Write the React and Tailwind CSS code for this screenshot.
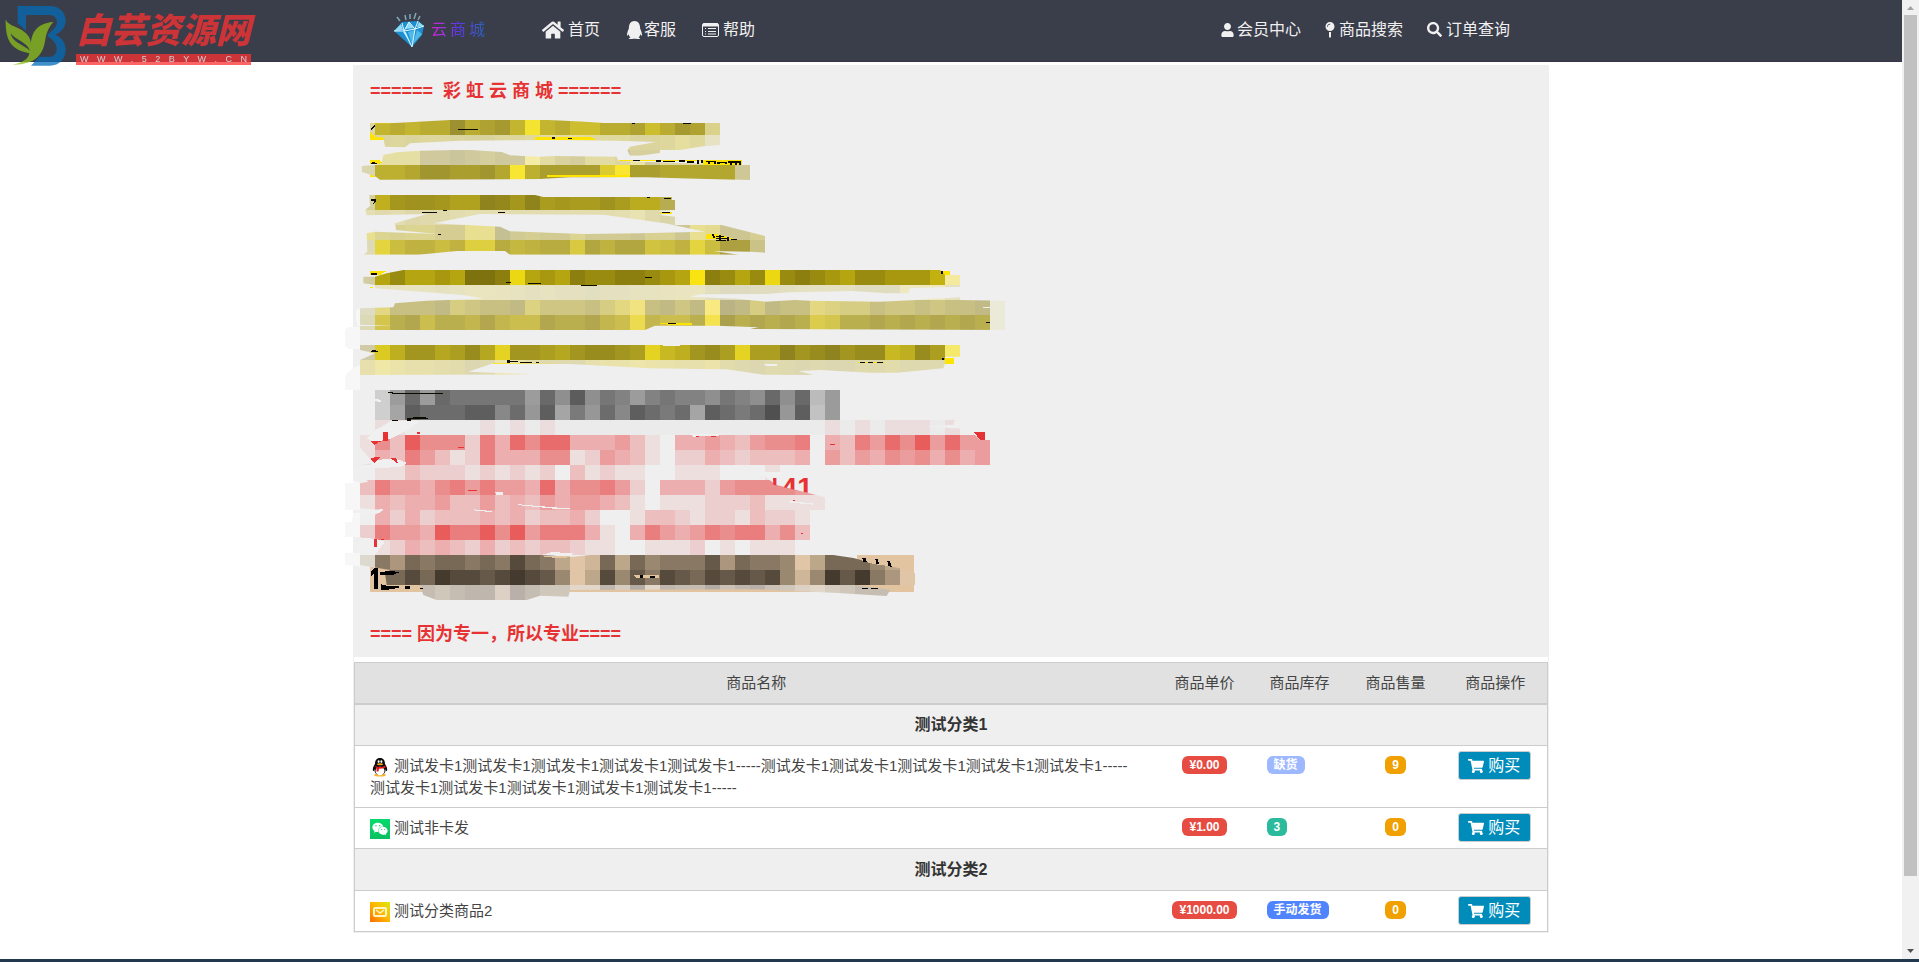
import React from 'react';
import { FaHome, FaQq, FaUser, FaMapPin, FaSearch, FaShoppingCart, FaWeixin } from 'react-icons/fa';

// Mosaic rows of the notice. Every digit is one square: 0 = dark end, 9 = light end.
const CELL = 45;
const notice = [
  {
    id: 'line1',
    clip: 'M90 190L150 190 220 186 330 180 625 180 690 183 735 185 790 189 1140 189 1140 255 1095 258 1020 270 900 287 870 287 862 270 870 260 948 246 830 242 640 240 360 242 210 250 195 262 135 260 130 232 105 232 90 215Z',
    rows: [
      { row: 4, col: 1, from: 'dcd7a0', to: 'dcd7a0', cells: '0' },
      { row: 4, col: 2, from: '9c9030', to: 'f4e330', cells: '4343303214943553325312' },
      { row: 4, col: 24, from: 'dad28a', to: 'dad28a', cells: '0' },
      { row: 5, col: 2, from: 'd0cb9a', to: 'e8e0a0', cells: '4545543355677766644586' },
      { row: 5, col: 24, from: 'e6e2c4', to: 'e6e2c4', cells: '0' },
      { row: 6, col: 17, from: 'c9c39c', to: 'e8e0a0', cells: '9044' },
    ],
  },
  {
    id: 'line2',
    clip: 'M130 285L170 277 240 272 380 269 485 276 510 286 550 288 600 290 645 288 830 290 835 303 1205 315 1230 315 1230 360 1070 356 920 352 690 352 600 357 120 359 108 350 65 335 65 318 105 315 125 310Z',
    rows: [
      { row: 6, col: 2, from: 'cbc59c', to: 'f4eca6', cells: '6661101211953255471444444' },
      { row: 7, col: 1, from: 'd9d5ad', to: 'd9d5ad', cells: '0' },
      { row: 7, col: 2, from: 'a0952f', to: 'f8e632', cells: '332001102931111691122222' },
      { row: 7, col: 26, from: 'cfc896', to: 'cfc896', cells: '0' },
    ],
  },
  {
    id: 'line3',
    clip: 'M88 405L585 405 610 411 995 411 995 420 1005 420 1005 450 960 452 965 466 1005 470 1005 495 1145 495 1275 528 1275 578 1230 575 1120 573 1195 584 510 584 495 573 350 573 235 584 70 584 82 575 80 520 105 515 295 522 168 510 165 490 260 462 80 466 76 450 90 438ZM420 462L790 464 975 490 1095 515 900 520 730 522 510 514 480 500 280 490Z',
    rows: [
      { row: 9, col: 1, from: 'd5d0a0', to: 'd5d0a0', cells: '0' },
      { row: 9, col: 2, from: '8f831d', to: 'c0b01f', cells: '9433466014054553588' },
      { row: 9, col: 21, from: 'b8ac50', to: 'b8ac50', cells: '0' },
      { row: 10, col: 1, from: 'd5d0a5', to: 'ece5b5', cells: '645344566655555556842' },
      { row: 11, col: 1, from: 'c5bf94', to: 'e8df90', cells: '965664499034336333255298224' },
      { row: 12, col: 1, from: 'dedab5', to: 'dedab5', cells: '0' },
      { row: 12, col: 2, from: 'aca040', to: 'e4d540', cells: '9533538824322713116539500' },
      { row: 12, col: 27, from: 'c9c388', to: 'c9c388', cells: '0' },
    ],
  },
  {
    id: 'line5',
    clip: 'M105 650L140 640 190 630 1800 630 1815 645 1860 645 1860 680 1710 685 1705 700 1640 700 1540 693 1350 697 1275 702 1080 703 1050 710 1190 716 1275 725 1365 720 1410 722 1620 725 1730 720 1770 717 1860 712 1860 720 1995 722 1995 810 1230 807 1255 802 1130 797 945 797 915 810 60 810 60 798 160 797 60 794 60 745 160 742 165 730 260 722 430 716 370 705 105 685 105 675 70 670 70 650Z',
    rows: [
      { row: 14, col: 1, from: 'd1cca2', to: 'd1cca2', cells: '0' },
      { row: 14, col: 2, from: '7e720f', to: 'f9e412', cells: '42443400184341221123491242821234223335' },
      { row: 14, col: 40, from: 'f5e9a0', to: 'f5e9a0', cells: '0' },
      { row: 15, col: 2, from: 'dedac0', to: 'f2ebbf', cells: '555434665434332334456620011233331117773' },
      { row: 16, col: 1, from: 'dfdcc4', to: 'dfdcc4', cells: '0' },
      { row: 16, col: 2, from: 'bab484', to: 'f8ea80', cells: '62221432215333246821319014122654423323221' },
      { row: 16, col: 43, from: 'ebead9', to: 'ebead9', cells: '0' },
      { row: 17, col: 1, from: 'dcd9b6', to: 'dcd9b6', cells: '0' },
      { row: 17, col: 2, from: 'aaa04e', to: 'f4e24e', cells: '52142231344122134834429021212652212121212' },
      { row: 17, col: 43, from: 'ebead9', to: 'ebead9', cells: '0' },
    ],
  },
  {
    id: 'line7',
    clip: 'M60 855L1860 855 1860 890 1815 890 1815 910 1810 925 1670 938 1590 938 1440 930 1375 933 1420 945 1270 944 1160 928 1080 927 930 925 690 912 460 910 385 935 575 943 60 945 60 900 105 880 60 870Z',
    rows: [
      { row: 19, col: 1, from: 'd0cba6', to: 'd0cba6', cells: '0' },
      { row: 19, col: 2, from: '8f831f', to: 'e4d322', cells: '85224314922342112396521393302102116513' },
      { row: 19, col: 40, from: 'f5e96b', to: 'f5e96b', cells: '0' },
      { row: 20, col: 1, from: 'dcd7b0', to: 'efe7a8', cells: '597554301884111566876557310210100213111' },
    ],
  },
  {
    id: 'line8',
    clip: 'M105 990H1500V1080H105Z',
    rows: [
      { row: 22, col: 2, from: '5c5c5c', to: 'cfcfcf', cells: '9515122222514042353233423414152' },
      { row: 22, col: 31, from: 'bbbbbb', to: '9b9b9b', cells: '09' },
      { row: 23, col: 2, from: '505050', to: 'cfcfcf', cells: '9612221142516352412326123205156' },
      { row: 23, col: 31, from: 'c2c2c2', to: '9b9b9b', cells: '09' },
    ],
  },
  {
    id: 'line9',
    clip: 'M105 1080L1845 1080 1840 1094 1755 1100 1900 1108 1905 1125 1920 1140 1950 1140 1950 1215 1455 1215 1455 1242 1260 1240 1310 1275 1455 1312 1455 1350 1410 1350 1410 1485 105 1485 105 1460 60 1430 60 1390 130 1350 60 1345 60 1270 85 1265 60 1240 60 1215 100 1210 50 1150 60 1125 95 1110Z',
    rows: [
      { row: 24, col: 2, from: 'ebebeb', to: 'e87070', cells: '110000010101000000000000000000101011101' },
      { row: 25, col: 1, from: 'efefef', to: 'e85c5c', cells: '163966627486884445310445435667.43758695855' },
      { row: 26, col: 1, from: 'efefef', to: 'e85c5c', cells: '143753127444661254310224323334.53546564645' },
      { row: 27, col: 1, from: 'efefef', to: 'e85c5c', cells: '0113222121212031211..1110001000' },
      { row: 28, col: 1, from: 'efefef', to: 'e85c5c', cells: '3755467575548466752.44425666655' },
      { row: 29, col: 1, from: 'efefef', to: 'e85c5c', cells: '1434453353435455431.11122231111' },
      { row: 30, col: 2, from: 'efefef', to: 'e85c5c', cells: '424233343423342..133212213221' },
      { row: 31, col: 1, from: 'efefef', to: 'e85c5c', cells: '275549779695777410475457677463' },
      { row: 32, col: 2, from: 'efefef', to: 'e85c5c', cells: '12434324232332110011120101110' },
    ],
  },
  {
    id: 'line12',
    clip: 'M60 1485L600 1485 700 1490 750 1485 1480 1485 1540 1494 1600 1510 1680 1525 1725 1540 1725 1575 1545 1575 1650 1590 1640 1608 1480 1598 1250 1588 690 1590 685 1610 600 1607 560 1620 290 1620 250 1605 240 1575 140 1575 135 1540 150 1530 60 1515Z',
    rows: [
      { row: 33, col: 1, from: 'ded9ce', to: 'ded9ce', cells: '0' },
      { row: 33, col: 2, from: '443a2e', to: 'e0c6a6', cells: '463433434134798373544426344597333579' },
      { row: 34, col: 2, from: '443a2e', to: 'e0c6a6', cells: '331301121012597152412312121585020469' },
      { row: 35, col: 5, from: 'b3aca5', to: 'e8dccd', cells: '353227135588260823304214578653333' },
    ],
  },
];

const mix = (from, to, level) => {
  const part = (hex, i) => parseInt(hex.slice(i, i + 2), 16);
  const rgb = [0, 2, 4].map((i) => Math.round(part(from, i) + ((part(to, i) - part(from, i)) * level) / 9));
  return `rgb(${rgb.join(',')})`;
};

const NoticeArt = () => (
  <svg
    className="-ml-[25px] mt-[17px] block"
    width="660"
    height="500"
    viewBox="15 180 1980 1500"
    shapeRendering="crispEdges"
    aria-hidden="true"
  >
    {/* marker colour behind the lines */}
    <path
      fill="#ffe400"
      d="M90 190H180V195H135V240H90ZM585 231H755L765 239H585ZM845 189H1095V192H845ZM90 300H120L130 312H90ZM90 345H105V351H90ZM835 300H1205V315H1090V303H840ZM620 345H870V351H620ZM90 414H117V425L105 436H90ZM215 458L325 450V454L280 461H215ZM435 458H615V461H435ZM900 411H996V418H960ZM935 456H996V461H935ZM218 521H315V526H218ZM380 569H497V573H380ZM1100 521H1125L1190 538H1098ZM90 633H140L120 645H90ZM90 681H99V684H90ZM1800 633H1830V645H1815ZM955 793L965 789H1055V795ZM458 911L510 899 655 909V912ZM1815 893H1842V911H1815ZM90 870H110V880H90Z"
    />
    <path fill="#e2c4a1" d="M90 1520H150V1575H1550V1485H1680L1722 1488V1596H90Z" />
    {notice.map(({ id, clip, rows }) => (
      <g key={id} clipPath={`url(#${id})`}>
        <clipPath id={id}>
          <path d={clip} clipRule="evenodd" />
        </clipPath>
        {rows.map(({ row, col, from, to, cells }) =>
          cells.split('').map((level, i) =>
            level === '.' ? null : (
              <rect
                key={`${row}-${col}-${i}`}
                x={15 + (col + i) * CELL}
                y={row * CELL}
                width={CELL}
                height={CELL}
                fill={mix(from, to, Number(level))}
              />
            )
          )
        )}
      </g>
    ))}
    {/* brush gaps */}
    <path
      fill="#f0f0f0"
      d="M105 1016L123 1020V1026L105 1024ZM82 1136L110 1108 155 1082H242L200 1112 148 1138 100 1146ZM108 1200L165 1195 202 1209 180 1222 60 1224 40 1250 40 1225 90 1215ZM1052 1122H1155L1130 1128 1060 1130ZM465 1296H490V1304H468ZM528 1332L620 1340 722 1348 640 1346 540 1336ZM400 1348L455 1353V1356L405 1352ZM40 1352L130 1348 120 1358 40 1364ZM605 1485L635 1476 700 1480 690 1488ZM512 1458L534 1462ZM1345 1323L1420 1330V1334L1350 1328ZM1243 1236H1320V1250H1280ZM60 1434L105 1436 135 1445 105 1485H40ZM970 855H1020V858H970ZM1268 912H1311V917H1280ZM1930 741H1950V744H1930Z"
    />
    <path
      fill="#f7f7f7"
      d="M48 750L60 743V798H50ZM15 815Q18 801 30 801H60V867H30Q15 865 15 850ZM15 950Q25 930 60 915V990H15ZM15 1269H40V1262L60 1268V1350H15ZM15 1386H35L40 1360H60V1432H15ZM15 1480H60V1520L15 1515Z"
    />
    {/* slivers of marker over the squares */}
    <path
      fill="#ffe400"
      d="M585 231H755L765 239H585ZM620 345H870V351H620ZM835 300H1205V315H1090V303H840ZM1100 521H1125L1190 538H1098ZM955 793L965 789H1055V795ZM1555 906H1635V909H1555Z"
    />
    <path fill="#e2c4a1" d="M602 1488H692L680 1493H640ZM880 1546H956V1554H890ZM1620 1486H1722V1535L1680 1522 1600 1512 1560 1500Z" />
    {/* leftovers of the letters */}
    <path
      fill="#0a0a00"
      d="M92 205L105 195V201L95 210ZM355 207H414V210H355ZM636 231H646V237H636ZM685 234H695V237H685ZM875 189H885V192H875ZM1030 189H1052V192H1030ZM93 309L100 306 111 309V312H93ZM880 300H900V303H880ZM948 300H962V306H948ZM970 303H1005V306H970ZM1018 300H1036V306H1018ZM1042 303H1062V309H1042ZM1070 300H1076V312H1070ZM1083 300H1090V309H1083ZM1098 303H1128V312H1122V306H1110V312H1104V306H1098ZM1132 306H1160V312H1154V309H1140V312H1132ZM1165 303H1203V315H1198V309H1190V315H1184V309H1176V315H1170V309H1165ZM93 417H108V426L100 434V429L104 422H93ZM245 456H290V459H245ZM310 450H322V453H310ZM475 456H495V459H475ZM920 411H930V414H920ZM972 414H993V417H972ZM965 456H990V459H965ZM294 523H303V526H294ZM1115 522H1120L1126 534H1120ZM1128 528H1152V531H1128ZM1128 534H1160V537H1128ZM1128 540H1158V543H1128ZM1138 525H1143V543H1138ZM1162 531H1168V543H1162ZM1174 537H1190V540H1174ZM93 639H111V645H93ZM498 666H512V669H498ZM565 669H602V672H565ZM723 675H770V678H723ZM915 651H935V654H915ZM1802 633H1808V642H1802ZM985 789H1008V792H985ZM1937 786H1950V789H1937ZM93 873L101 870 113 873V876H93ZM501 900H509V909H501ZM509 903H535V906H509ZM540 905H575V908H540ZM588 905H596V908H588ZM1806 894H1813V900H1806ZM1560 906H1575V909H1560ZM1585 906H1600V909H1585ZM1610 906H1630V909H1610ZM145 996H155L168 1000H310V1002H168L145 999ZM155 1080H175V1083H155ZM200 1075L232 1071H255L266 1077H212V1083H200Z"
    />
    <path
      fill="#000"
      d="M92 1535L104 1523H113V1587H103V1538L92 1552ZM120 1536L150 1533 180 1536 155 1546 122 1546ZM122 1580V1572L145 1579H178V1583L140 1590H122ZM196 1578H209V1587H196ZM240 1584H249V1587H240ZM899 1545H910V1554H899ZM930 1549H944V1553H930ZM1567 1494H1578V1502L1586 1507H1570ZM1606 1497H1613L1618 1513H1608ZM1642 1503H1650L1656 1521 1644 1518ZM1566 1584H1584V1587H1566ZM1594 1584H1613V1587H1594Z"
    />
    <path
      fill="#e63232"
      d="M130 1116H144V1142L120 1145 104 1154 90 1142H130ZM90 1196L112 1190H124L104 1208ZM152 1194H168L174 1208H168ZM232 1116H240V1121H232ZM355 1161H372V1164H355ZM1068 1128H1078V1131H1068ZM1114 1128H1127V1131H1114ZM1470 1152H1485V1155H1470ZM1900 1116H1936V1140H1922ZM102 1437H112V1461H102ZM123 1437H132V1440H123ZM385 1290H410V1292H385ZM1359 1320H1365V1323H1359ZM1383 1419H1390V1422H1383Z"
    />
    <clipPath id="digits">
      <path d="M1298 1240H1440V1305L1390 1296 1300 1274Z" />
    </clipPath>
    <text
      x="1278"
      y="1311"
      clipPath="url(#digits)"
      fill="#e63232"
      className="font-['Liberation_Sans',sans-serif] text-[84px] font-bold"
    >
      141
    </text>
  </svg>
);

const SiteMark = () => (
  <div className="pointer-events-none absolute left-0 top-0 flex items-start opacity-75">
    <svg className="ml-1 mt-1 h-[63px] w-[63px]" viewBox="12 12 189 189" aria-hidden="true">
      <path
        fill="#046cb8"
        d="M53 18H150C180 18 197 40 197 62C197 80 185 95 165 104C185 112 197 128 197 148C197 178 178 197 150 197H93L118 170H148C160 170 170 162 170 146C170 130 160 122 146 110L142 104L150 98C165 85 171 76 171 66C171 52 160 45 148 45H78V92L53 70Z"
      />
      <path
        fill="#8dc11b"
        fillRule="evenodd"
        d="M17 58C25 85 85 80 93 128C95 105 105 70 160 66C148 80 140 95 136 118C130 165 105 195 38 194C60 190 85 180 88 160C40 150 15 130 17 58ZM32 100C35 125 70 135 90 152C80 125 45 120 32 100Z"
      />
    </svg>
    <div className="ml-[9px] mt-2 w-[175px]">
      <div className="flex h-[46px] items-center text-[35px] font-black italic leading-[44px] text-[#fd3131]">
        白芸资源网
      </div>
      <div className="flex h-[11px] items-center justify-between bg-[#fd3131] px-1 text-[9px] leading-[11px] text-white">
        {'WWW.52BYW.CN'.split('').map((letter, i) => (
          <span key={i}>{letter}</span>
        ))}
      </div>
    </div>
  </div>
);

const Diamond = () => (
  <svg className="h-9 w-8" viewBox="0 0 32 36" aria-hidden="true">
    <path fill="#1d8fd0" d="M1 19L9 10 25 9 31 14 29 23 19 35Z" />
    <path fill="#8fdcf7" d="M1 19L8 12 10 18ZM12 17L16 10 21 16ZM24 15L26 10 31 14ZM10 20L18 32 13 20Z" />
    <path fill="#4fb9ea" d="M15 20L19 33 22 18ZM24 18L20 32 29 22Z" />
    <path stroke="#e4f8ff" strokeWidth="1" fill="none" d="M1 19L11 19 22 17 31 14M11 19L9 11M11 19L16 10 22 17 25 9M11 19L19 35 22 17" />
    <path stroke="#7fa9b4" strokeWidth="1.5" fill="none" d="M4 5L7 9M12 3L13 8M17 2L17 7M23 1L21 7M27 4L25 8" />
  </svg>
);

const ListIcon = () => (
  <svg className="h-[14px] w-[17px]" viewBox="0 0 17 14" fill="none" stroke="currentColor" aria-hidden="true">
    <rect x="0.5" y="0.5" width="16" height="13" rx="1.5" />
    <path d="M1 2H16" strokeWidth="3" />
    <path d="M3 5.5H4M3 8.5H4M3 11H4M6 5.5H14M6 8.5H14M6 11H14" />
  </svg>
);

const QqIcon = () => (
  <svg className="mr-1 inline-block h-5 w-5 align-middle" viewBox="0 0 20 20" aria-hidden="true">
    <ellipse cx="10" cy="18" rx="6" ry="1.6" fill="#f7b52c" />
    <path d="M10 1C6.5 1 5 3.5 5 7C3 10 2.5 12 3 14C3.5 14.5 4.5 13 5 12H15C15.5 13 16.5 14.5 17 14C17.5 12 17 10 15 7C15 3.5 13.5 1 10 1Z" fill="#0b0b0b" />
    <ellipse cx="10" cy="13.5" rx="5.5" ry="4.5" fill="#0b0b0b" />
    <ellipse cx="10" cy="14" rx="4.5" ry="4.2" fill="#fff" />
    <path d="M4.5 8.5Q10 11.5 15.5 8.5V10.5Q12 12 9 11.8L8.5 14.5H6.5V11Z" fill="#e9161e" />
    <ellipse cx="8.6" cy="4.6" rx="1" ry="1.4" fill="#fff" />
    <ellipse cx="11.4" cy="4.6" rx="1" ry="1.4" fill="#fff" />
    <ellipse cx="10" cy="7.3" rx="3.2" ry="1" fill="#f7a51c" />
  </svg>
);

const WechatIcon = () => (
  <span className="mr-1 inline-flex h-5 w-5 items-center justify-center bg-gradient-to-b from-[#05dc6c] to-[#0bbf60] align-middle text-white">
    <FaWeixin className="h-4 w-4" />
  </span>
);

const MailIcon = () => (
  <span className="mr-1 inline-flex h-5 w-5 items-center justify-center bg-gradient-to-tr from-[#ff6a00] via-[#ffb400] to-[#d8ea10] align-middle">
    <svg className="h-[10px] w-[14px]" viewBox="0 0 14 10" fill="none" stroke="#fff6c8" strokeWidth="2" aria-hidden="true">
      <rect x="1" y="1" width="12" height="8" rx="1" />
      <path d="M3 3L7 6 11 3" strokeWidth="1.5" />
    </svg>
  </span>
);

const leftLinks = [
  { label: '首页', icon: <FaHome className="h-[22px] w-[22px]" />, gap: 'gap-1' },
  { label: '客服', icon: <FaQq className="h-[18px] w-[17px]" />, gap: 'gap-px' },
  { label: '帮助', icon: <ListIcon />, gap: 'gap-1' },
];

const rightLinks = [
  { label: '会员中心', icon: <FaUser className="h-[14px] w-[13px]" />, gap: 'gap-[3px]' },
  { label: '商品搜索', icon: <FaMapPin className="h-4 w-[10px]" />, gap: 'gap-1' },
  { label: '订单查询', icon: <FaSearch className="h-[15px] w-[15px]" />, gap: 'gap-1' },
];

const longName = '测试发卡1'.repeat(5) + '-----';

const categories = [
  {
    title: '测试分类1',
    items: [
      { name: longName + longName + longName, icon: <QqIcon />, price: '¥0.00', stock: '缺货', tone: 'bg-[#9db8ff]', sold: 9 },
      { name: '测试非卡发', icon: <WechatIcon />, price: '¥1.00', stock: '3', tone: 'bg-[#2bbb9c]', sold: 0 },
    ],
  },
  {
    title: '测试分类2',
    items: [
      { name: '测试分类商品2', icon: <MailIcon />, price: '¥1000.00', stock: '手动发货', tone: 'bg-[#5084ff]', sold: 0 },
    ],
  },
];

const NavLinks = ({ links, spacing }) => (
  <ul className={`flex items-center ${spacing}`}>
    {links.map(({ label, icon, gap }) => (
      <li key={label}>
        <a href="#" className={`flex items-center text-base text-[#f0f0f0] ${gap}`}>
          {icon}
          <span>{label}</span>
        </a>
      </li>
    ))}
  </ul>
);

const Badge = ({ tone, children }) => (
  <span className={`inline-block h-[18px] rounded-md px-[7px] text-xs font-bold leading-[18px] text-white ${tone}`}>
    {children}
  </span>
);

const ProductTable = () => (
  <table className="w-full table-fixed border-collapse border border-[#ccc] text-[15px] text-[#444]">
    <thead>
      <tr className="h-[41px] border-b-2 border-[#ccc] bg-[#e1e1e1]">
        <th className="font-normal">商品名称</th>
        <th className="w-[94px] font-normal">商品单价</th>
        <th className="w-24 font-normal">商品库存</th>
        <th className="w-24 font-normal">商品售量</th>
        <th className="w-[104px] font-normal">商品操作</th>
      </tr>
    </thead>
    {categories.map(({ title, items }) => (
      <tbody key={title}>
        <tr className="h-[42px] border-b border-[#ccc] bg-[#efefef]">
          <th colSpan="5" className="text-base font-bold text-[#333]">
            {title}
          </th>
        </tr>
        {items.map(({ name, icon, price, stock, tone, sold }) => (
          <tr key={name} className="border-b border-[#ccc] bg-white align-top">
            <td className="pb-2 pl-[15px] pr-4 pt-[9px] leading-[22px]">
              {icon}
              {name}
            </td>
            <td className="pt-[9px] text-center leading-[18px]">
              <Badge tone="bg-[#e74c43]">{price}</Badge>
            </td>
            <td className="pl-[15px] pt-[9px] leading-[18px]">
              <Badge tone={tone}>{stock}</Badge>
            </td>
            <td className="pt-[9px] text-center leading-[18px]">
              <Badge tone="bg-[#f0a000]">{sold}</Badge>
            </td>
            <td className="pb-[6px] pl-[14px] pr-4 pt-[5px]">
              <button
                type="button"
                className="flex h-[29px] w-full items-center justify-center gap-1 rounded-[3px] border border-[#ccc] bg-[#008cba] text-base leading-none text-white"
              >
                <FaShoppingCart className="h-4 w-4" />
                购买
              </button>
            </td>
          </tr>
        ))}
      </tbody>
    ))}
  </table>
);

const ScrollBar = () => (
  <div className="flex w-[17px] shrink-0 flex-col items-center bg-[#f1f1f1]" aria-hidden="true">
    <div className="flex h-[15px] items-center">
      <svg className="h-1 w-[7px]" viewBox="0 0 7 4" fill="#a3a3a3">
        <path d="M0 4L3.5 0 7 4Z" />
      </svg>
    </div>
    <div className="flex w-[13px] flex-1 flex-col">
      <div className="grow-[13] bg-[#c1c1c1]" />
      <div className="grow" />
    </div>
    <div className="flex h-[17px] items-center">
      <svg className="h-1 w-[7px]" viewBox="0 0 7 4" fill="#505050">
        <path d="M0 0L3.5 4 7 0Z" />
      </svg>
    </div>
  </div>
);

const App = () => {
  return (
    <div className="relative flex min-h-screen flex-col bg-white font-['Liberation_Sans','Noto_Sans_CJK_SC',sans-serif]">
      <div className="flex flex-1">
        <div className="min-w-0 flex-1">
          {/* Navbar */}
          <nav className="h-[62px] border-b border-[#363346] bg-[#3a3d4a]">
            <div className="mx-auto flex h-[59px] max-w-[1196px] items-center justify-between pl-10 pr-[39px]">
              <div className="flex items-center">
                <a href="#" className="mr-[57px] flex items-center gap-[6px]">
                  <Diamond />
                  <span className="flex gap-[3px] bg-gradient-to-r from-[#d414d8] via-[#5a35e8] to-[#2b60b8] bg-clip-text text-base text-transparent">
                    <span>云</span>
                    <span>商</span>
                    <span>城</span>
                  </span>
                </a>
                <NavLinks links={leftLinks} spacing="gap-[26px]" />
              </div>
              <NavLinks links={rightLinks} spacing="gap-6" />
            </div>
          </nav>

          <main className="mx-auto mt-[3px] max-w-[1196px]">
            {/* Notice */}
            <section className="bg-[#efefef] px-[17px] pb-[11px] pt-[14px] text-lg font-bold text-[#e63232]">
              <h1 className="leading-6">======&nbsp; 彩 虹 云 商 城 ======</h1>
              <NoticeArt />
              <p className="mt-[2px] leading-6">==== 因为专一，所以专业====</p>
            </section>

            {/* Products */}
            <section className="border border-t-0 border-[#efefef] pt-[5px]">
              <ProductTable />
            </section>
          </main>
        </div>
        <ScrollBar />
      </div>
      <div className="h-[3px] bg-[#22384f]" />
      <SiteMark />
    </div>
  );
};

export default App;
